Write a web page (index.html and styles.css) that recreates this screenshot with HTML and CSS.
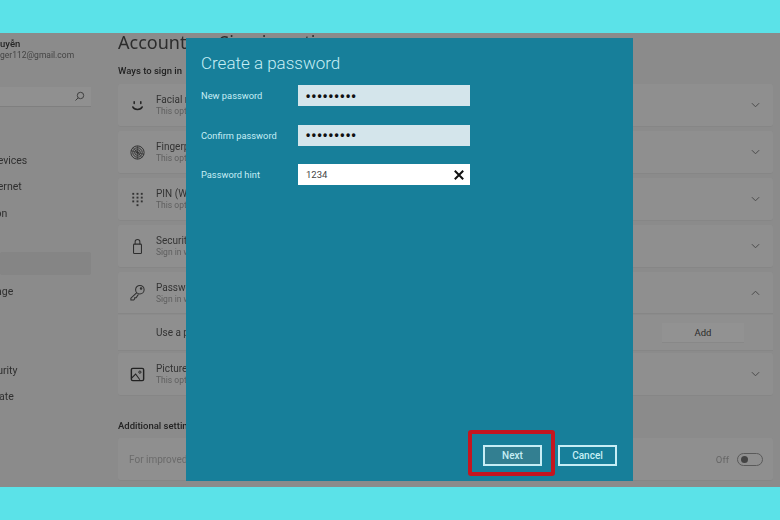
FILE: index.html
```html
<!DOCTYPE html>
<html lang="en">
<head>
    <meta charset="UTF-8">
    <title>Create a password</title>
    <link rel="stylesheet" href="styles.css">
</head>
<body>
    <div class="band"></div>

    <div class="desktop">
        <div class="settings">
            <aside class="sidebar">
                <div class="user">
                    <div class="user-name">uyễn</div>
                    <div class="user-mail">ger112@gmail.com</div>
                </div>
                <div class="search">
                    <svg width="11" height="11" viewBox="0 0 11 11" fill="none" stroke="#3e3e3e" stroke-width="1">
                        <circle cx="6.5" cy="4.5" r="3.2"/>
                        <path d="M4.2 6.8 1.5 9.5"/>
                    </svg>
                </div>
                <nav class="nav">
                    <div class="nav-item">System</div>
                    <div class="nav-item">Bluetooth &amp; devices</div>
                    <div class="nav-item">Network &amp; internet</div>
                    <div class="nav-item">Personalization</div>
                    <div class="nav-item">Apps</div>
                    <div class="nav-item active">Accounts</div>
                    <div class="nav-item">Time &amp; language</div>
                    <div class="nav-item">Gaming</div>
                    <div class="nav-item">Accessibility</div>
                    <div class="nav-item">Privacy &amp; security</div>
                    <div class="nav-item">Windows Update</div>
                </nav>
            </aside>

            <main class="content">
                <h1>Accounts &nbsp;›&nbsp; Sign-in options</h1>
                <h2>Ways to sign in</h2>

                <div class="card">
                    <svg class="card-icon" viewBox="0 0 18 18" fill="none" stroke="#222" stroke-width="1.6">
                        <path d="M5.5 5v2M12.500 5v2" stroke-linecap="round"/>
                        <path d="M4 10.500c1.500 3.500 8.500 3.500 10 0" stroke-linecap="round"/>
                    </svg>
                    <div class="card-text">
                        <div class="card-title">Facial recognition</div>
                        <div class="card-sub">This option is unavailable</div>
                    </div>
                    <svg class="chevron" viewBox="0 0 10 6"><path d="M1 1l4 4 4-4"/></svg>
                </div>

                <div class="card">
                    <svg class="card-icon" viewBox="0 0 18 18" fill="none" stroke="#2e2e2e" stroke-width="1">
                        <circle cx="9" cy="9" r="7"/>
                        <circle cx="9" cy="9" r="5"/>
                        <circle cx="9" cy="9" r="3"/>
                        <circle cx="9" cy="9" r="1"/>
                        <path d="M2 7l14 4M4 3.500l10 11M9 2v14" stroke-width=".6"/>
                    </svg>
                    <div class="card-text">
                        <div class="card-title">Fingerprint recognition</div>
                        <div class="card-sub">This option is unavailable</div>
                    </div>
                    <svg class="chevron" viewBox="0 0 10 6"><path d="M1 1l4 4 4-4"/></svg>
                </div>

                <div class="card">
                    <svg class="card-icon" viewBox="0 0 18 18" fill="#333">
                        <rect x="3.500" y="2" width="2" height="2"/><rect x="8" y="2" width="2" height="2"/><rect x="12.500" y="2" width="2" height="2"/>
                        <rect x="3.500" y="6" width="2" height="2"/><rect x="8" y="6" width="2" height="2"/><rect x="12.500" y="6" width="2" height="2"/>
                        <rect x="3.500" y="10" width="2" height="2"/><rect x="8" y="10" width="2" height="2"/><rect x="12.500" y="10" width="2" height="2"/>
                        <rect x="8" y="14" width="2" height="2"/>
                    </svg>
                    <div class="card-text">
                        <div class="card-title">PIN (Windows Hello)</div>
                        <div class="card-sub">This option is unavailable</div>
                    </div>
                    <svg class="chevron" viewBox="0 0 10 6"><path d="M1 1l4 4 4-4"/></svg>
                </div>

                <div class="card">
                    <svg class="card-icon" viewBox="0 0 18 18" fill="none" stroke="#2e2e2e" stroke-width="1.1">
                        <rect x="4.800" y="6.500" width="8.400" height="10" rx="1"/>
                        <path d="M6.500 6.500V4a2.500 2.500 0 0 1 5 0v2.500"/>
                    </svg>
                    <div class="card-text">
                        <div class="card-title">Security key</div>
                        <div class="card-sub">Sign in with a physical key</div>
                    </div>
                    <svg class="chevron" viewBox="0 0 10 6"><path d="M1 1l4 4 4-4"/></svg>
                </div>

                <div class="card card-open">
                    <svg class="card-icon" viewBox="0 0 18 18" fill="none" stroke="#2e2e2e" stroke-width="1.1">
                        <circle cx="11.500" cy="6" r="4.500"/>
                        <circle cx="12.800" cy="4.700" r=".8"/>
                        <path d="M8.300 9.200 2 15v2h3l1-1.200V14.500h1.500L10 11"/>
                    </svg>
                    <div class="card-text">
                        <div class="card-title">Password</div>
                        <div class="card-sub">Sign in with your password</div>
                    </div>
                    <svg class="chevron" viewBox="0 0 10 6"><path d="M1 5l4-4 4 4"/></svg>
                </div>
                <div class="card-detail">
                    <span class="card-title clipped">Use a password</span>
                    <span class="add-btn">Add</span>
                </div>

                <div class="card">
                    <svg class="card-icon" viewBox="0 0 18 18" fill="none" stroke="#222" stroke-width="1.500">
                        <rect x="2.500" y="2.500" width="13" height="13" rx="1.500"/>
                        <path d="M2.500 13 7 8.500l4.500 6" stroke-width="1.100"/>
                        <circle cx="11.500" cy="6.500" r="1.200" stroke-width="1"/>
                    </svg>
                    <div class="card-text">
                        <div class="card-title">Picture password</div>
                        <div class="card-sub">This option is unavailable</div>
                    </div>
                    <svg class="chevron" viewBox="0 0 10 6"><path d="M1 1l4 4 4-4"/></svg>
                </div>

                <h2 class="extra">Additional settings</h2>
                <div class="card card-last">
                    <div class="card-faded">For improved security</div>
                    <span class="off-label">Off</span>
                    <span class="toggle"><span class="knob"></span></span>
                </div>
            </main>
        </div>

        <!-- dialog sits on top of the dimmed settings window -->
        <div class="dialog">
            <div class="dialog-title">Create a password</div>
            <div class="form">
                <label>New password</label>
                <div class="field filled">•••••••••</div>
                <label>Confirm password</label>
                <div class="field filled">•••••••••</div>
                <label>Password hint</label>
                <div class="field hint">
                    <span>1234</span>
                    <svg width="10" height="10" viewBox="0 0 10 10" stroke="#111" stroke-width="2"><path d="M.8.8l8.400 8.400M9.200.8.800 9.200"/></svg>
                </div>
            </div>
            <div class="dialog-footer">
                <div class="highlight">
                    <button class="btn btn-next">Next</button>
                </div>
                <button class="btn btn-cancel">Cancel</button>
            </div>
        </div>
    </div>

    <div class="band"></div>
</body>
</html>
```

FILE: styles.css
```css
* {
    margin: 0;
    padding: 0;
    box-sizing: border-box;
    font-family: Roboto, "Liberation Sans", sans-serif;
}

body {
    width: 780px;
    height: 520px;
    overflow: hidden;
    display: flex;
    flex-direction: column;
    background: #5be2e8;
}

.band {
    height: 33px;
    background: #5be2e8;
}

.desktop {
    position: relative;
    flex: 1;
    background: #8b8b8b;
    overflow: hidden;
}

/* Dimmed settings window */
.settings {
    display: flex;
    height: 100%;
    filter: blur(0.45px);
}

.sidebar {
    width: 118px;
    flex-shrink: 0;
    overflow: hidden;
    color: #2f2f2f;
}

.user {
    padding-top: 5px;
    white-space: nowrap;
}

.user-name {
    font-size: 9.500px;
    font-weight: 500;
    line-height: 12px;
    color: #262626;
}

.user-mail {
    font-size: 8.500px;
    line-height: 11px;
    color: #444;
}

.search {
    width: 91px;
    height: 20px;
    margin-top: 26px;
    display: flex;
    align-items: center;
    justify-content: flex-end;
    padding-right: 6px;
    background: #909090;
    border-bottom: 1px solid #7f7f7f;
}

.nav {
    margin-top: 15px;
}

.nav-item {
    width: 91px;
    height: 26.200px;
    line-height: 26px;
    font-size: 10.500px;
    white-space: nowrap;
    text-indent: -65px;
    border-radius: 2px;
}

.nav-item.active {
    height: 23px;
    margin: -1px 0 4.200px;
    background: #858585;
}

.content {
    width: 655px;
    flex-shrink: 0;
}

h1 {
    font-family: "Noto Sans", sans-serif;
    font-size: 18px;
    font-weight: 400;
    line-height: 18px;
    color: #2c2c2c;
    white-space: nowrap;
}

h2 {
    font-size: 9.500px;
    font-weight: 500;
    line-height: 12px;
    color: #222;
}

.content > h2 {
    margin-top: 14px;
    margin-bottom: 7px;
}

.content > h2.extra {
    margin-top: 24px;
    margin-bottom: 6px;
}

.card {
    height: 43px;
    margin-bottom: 4px;
    display: flex;
    align-items: center;
    padding: 0 13px 0 11px;
    background: #8f8f8f;
    border-radius: 3px;
    border-bottom: 1px solid #868686;
}

.card-open {
    height: 42px;
    margin-bottom: 1px;
    border-radius: 3px 3px 0 0;
}

.card-last {
    margin-bottom: 0;
}

.card-icon {
    width: 17px;
    height: 17px;
    flex-shrink: 0;
}

/* text runs under the dialog, so it only needs to reach its edge */
.card-text {
    width: 34px;
    margin-left: 10px;
    margin-right: auto;
    overflow: hidden;
    white-space: nowrap;
}

.card-title {
    font-size: 10px;
    line-height: 12px;
    color: #333;
}

.card-sub {
    font-size: 8.500px;
    line-height: 10px;
    color: #5f5f5f;
}

.clipped {
    width: 34px;
    overflow: hidden;
    white-space: nowrap;
}

.chevron {
    width: 9px;
    height: 6px;
    fill: none;
    stroke: #4a4a4a;
    stroke-width: 1.100;
}

.card-detail {
    height: 36px;
    margin-bottom: 2px;
    display: flex;
    align-items: center;
    justify-content: space-between;
    padding: 0 29px 0 38px;
    background: #8f8f8f;
    border-bottom: 1px solid #868686;
}

.add-btn {
    width: 82px;
    height: 20px;
    line-height: 20px;
    text-align: center;
    font-size: 9.500px;
    color: #2c2c2c;
    background: #929292;
    border-bottom: 1px solid #888;
}

.card-faded {
    width: 60px;
    margin-right: auto;
    overflow: hidden;
    font-size: 10px;
    color: #6b6b6b;
    white-space: nowrap;
}

.off-label {
    font-size: 9.500px;
    color: #666;
    margin-right: 8px;
}

.toggle {
    width: 26px;
    height: 13px;
    padding: 0 3px;
    display: flex;
    align-items: center;
    border: 1px solid #5a5a5a;
    border-radius: 7px;
    margin-right: -3px;
}

.knob {
    width: 7px;
    height: 7px;
    border-radius: 50%;
    background: #444;
}

/* Create a password dialog */
.dialog {
    position: absolute;
    left: 186px;
    top: 5px;
    width: 447px;
    height: 443px;
    display: flex;
    flex-direction: column;
    padding: 14px 16px 5px 15px;
    background: #177f9a;
    color: #c6eef5;
}

.dialog-title {
    font-size: 17px;
    font-weight: 300;
    line-height: 22px;
}

.form {
    margin-top: 11px;
    display: grid;
    grid-template-columns: 97px 172px;
    grid-auto-rows: 21px;
    row-gap: 18.500px;
    align-items: center;
}

label {
    font-size: 9.300px;
}

.field {
    height: 21px;
    display: flex;
    align-items: center;
    padding-left: 8px;
    color: #111;
    background: #d4e5eb;
}

.filled {
    font-size: 12px;
    letter-spacing: 1.500px;
    font-weight: 700;
    font-family: "Liberation Sans", sans-serif;
}

.hint {
    justify-content: space-between;
    padding-right: 6px;
    background: #fff;
    font-size: 9.500px;
    color: #444;
}

.dialog-footer {
    margin-top: auto;
    display: flex;
    align-items: flex-end;
    justify-content: flex-end;
    gap: 3px;
}

.highlight {
    padding: 11px 9px 6px 11px;
    border: 4px solid #c4161f;
    border-radius: 3px;
}

.btn {
    display: block;
    width: 59px;
    height: 21px;
    font-size: 10px;
    font-weight: 500;
    color: #c6eef5;
    background: transparent;
    border: 2px solid #c6eef5;
}

.btn-next {
    background: #337f91;
}

.btn-cancel {
    margin-bottom: 10px;
}
```
